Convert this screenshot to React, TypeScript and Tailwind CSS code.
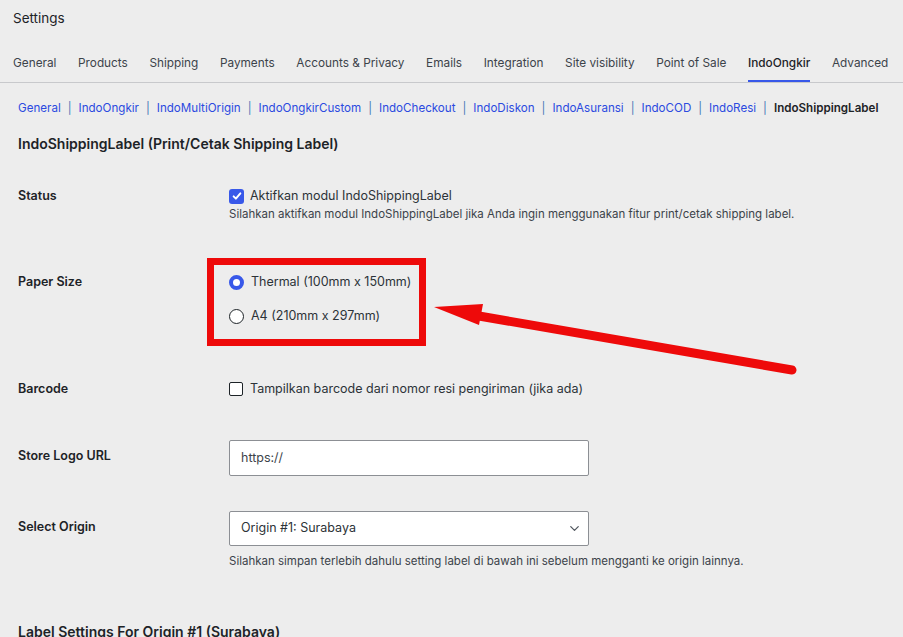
import { ChevronDown } from 'lucide-react';

const tabs = [
  'General',
  'Products',
  'Shipping',
  'Payments',
  'Accounts & Privacy',
  'Emails',
  'Integration',
  'Site visibility',
  'Point of Sale',
  'IndoOngkir',
  'Advanced',
];

const subLinks = [
  'General',
  'IndoOngkir',
  'IndoMultiOrigin',
  'IndoOngkirCustom',
  'IndoCheckout',
  'IndoDiskon',
  'IndoAsuransi',
  'IndoCOD',
  'IndoResi',
];

function Row({ label, labelPad = 'pt-0', className = '', children }: { label: string; labelPad?: string; className?: string; children: React.ReactNode }) {
  return (
    <div className={`flex ${className}`}>
      <div className={`w-[211px] shrink-0 text-[12.5px] font-semibold leading-5 text-[#1d2327] ${labelPad}`}>{label}</div>
      <div className="flex-1">{children}</div>
    </div>
  );
}

export default function App() {
  return (
    <div className="relative min-h-[637px] w-full overflow-hidden bg-[#ededed] font-['Inter','Noto_Sans',sans-serif] text-[#1d2327]">
      {/* Page title */}
      <h1 className="px-[13px] pt-[8px] text-[13.5px] leading-5 font-normal">Settings</h1>

      {/* Top tabs */}
      <nav className="mt-[25px] flex gap-[21.6px] whitespace-nowrap border-b border-[#c8c9cc] px-[13px]">
        {tabs.map((t) => (
          <div
            key={t}
            className={`pb-[7px] text-[11.8px] leading-5 ${
              t === 'IndoOngkir' ? 'border-b-2 border-[#3858e9] font-medium text-[#1d2327]' : 'border-b-2 border-transparent text-[#3c434a]'
            }`}
          >
            {t}
          </div>
        ))}
      </nav>

      <div className="px-[18px]">
        {/* Sub links */}
        <div className="mt-[15px] flex items-center whitespace-nowrap text-[11.6px] leading-5">
          {subLinks.map((s) => (
            <span key={s} className="flex items-center">
              <span className="text-[#2b4ae0]">{s}</span>
              <span className="px-[7px] text-[#4a78b8]">|</span>
            </span>
          ))}
          <span className="font-semibold text-[#1d2327]">IndoShippingLabel</span>
        </div>

        <h2 className="mt-[16px] text-[14px] font-semibold leading-5">IndoShippingLabel (Print/Cetak Shipping Label)</h2>

        <Row label="Status" className="mt-[32px]">
          <label className="flex items-center gap-[6px] text-[12.5px] leading-5 text-[#2c3338]">
            <span className="flex h-[15px] w-[15px] items-center justify-center rounded-[3px] bg-[#3858e9]">
              <svg viewBox="0 0 16 16" className="h-[12px] w-[12px]" fill="none" stroke="white" strokeWidth="2.6" strokeLinecap="round" strokeLinejoin="round">
                <path d="M3.5 8.5l3 3 6-7" />
              </svg>
            </span>
            Aktifkan modul IndoShippingLabel
          </label>
          <p className="text-[11.5px] leading-4 text-[#3c434a]">
            Silahkan aktifkan modul IndoShippingLabel jika Anda ingin menggunakan fitur print/cetak shipping label.
          </p>
        </Row>

        <Row label="Paper Size" className="mt-[50px]">
          <div className="flex flex-col gap-[14px]">
            <label className="flex items-center gap-[7px] text-[12.5px] leading-5 text-[#2c3338]">
              <span className="h-[15px] w-[15px] rounded-full border-[4px] border-[#3858e9] bg-white" />
              Thermal (100mm x 150mm)
            </label>
            <label className="flex items-center gap-[7px] text-[12.5px] leading-5 text-[#2c3338]">
              <span className="h-[15px] w-[15px] rounded-full border border-[#1d2327] bg-white" />
              A4 (210mm x 297mm)
            </label>
          </div>
        </Row>

        <Row label="Barcode" className="mt-[53px]">
          <label className="flex items-center gap-[7px] text-[12.5px] leading-5 text-[#2c3338]">
            <span className="h-[14px] w-[14px] rounded-[2px] border border-[#1d2327] bg-white" />
            Tampilkan barcode dari nomor resi pengiriman (jika ada)
          </label>
        </Row>

        <Row label="Store Logo URL" labelPad="pt-[6px]" className="mt-[41px]">
          <div className="flex h-[36px] w-[360px] items-center rounded-[2px] border border-[#8c8f94] bg-white px-[11px] text-[12.5px] text-[#3c434a]">
            https://
          </div>
        </Row>

        <Row label="Select Origin" labelPad="pt-[6px]" className="mt-[35px]">
          <div className="flex h-[35px] w-[360px] items-center justify-between rounded-[2px] border border-[#8c8f94] bg-white pl-[11px] pr-[6px] text-[12.5px] text-[#2c3338]">
            Origin #1: Surabaya
            <ChevronDown size={15} strokeWidth={2} className="text-[#50575e]" />
          </div>
          <p className="mt-[7px] text-[11.5px] leading-4 text-[#3c434a]">
            Silahkan simpan terlebih dahulu setting label di bawah ini sebelum mengganti ke origin lainnya.
          </p>
        </Row>

        <h2 className="mt-[53px] text-[14px] font-semibold leading-5">Label Settings For Origin #1 (Surabaya)</h2>
      </div>

      {/* Annotation: red frame + arrow pointing at the paper size options */}
      <svg className="pointer-events-none absolute left-0 top-0" width="903" height="637" viewBox="0 0 903 637">
        <rect x="210.5" y="261.5" width="212" height="81" fill="none" stroke="#ee0a0a" strokeWidth="7" />
        <line x1="479" y1="316" x2="792" y2="370" stroke="#ee0a0a" strokeWidth="9" strokeLinecap="round" />
        <polygon points="434,307 483,304 479,325" fill="#ee0a0a" />
      </svg>
    </div>
  );
}
